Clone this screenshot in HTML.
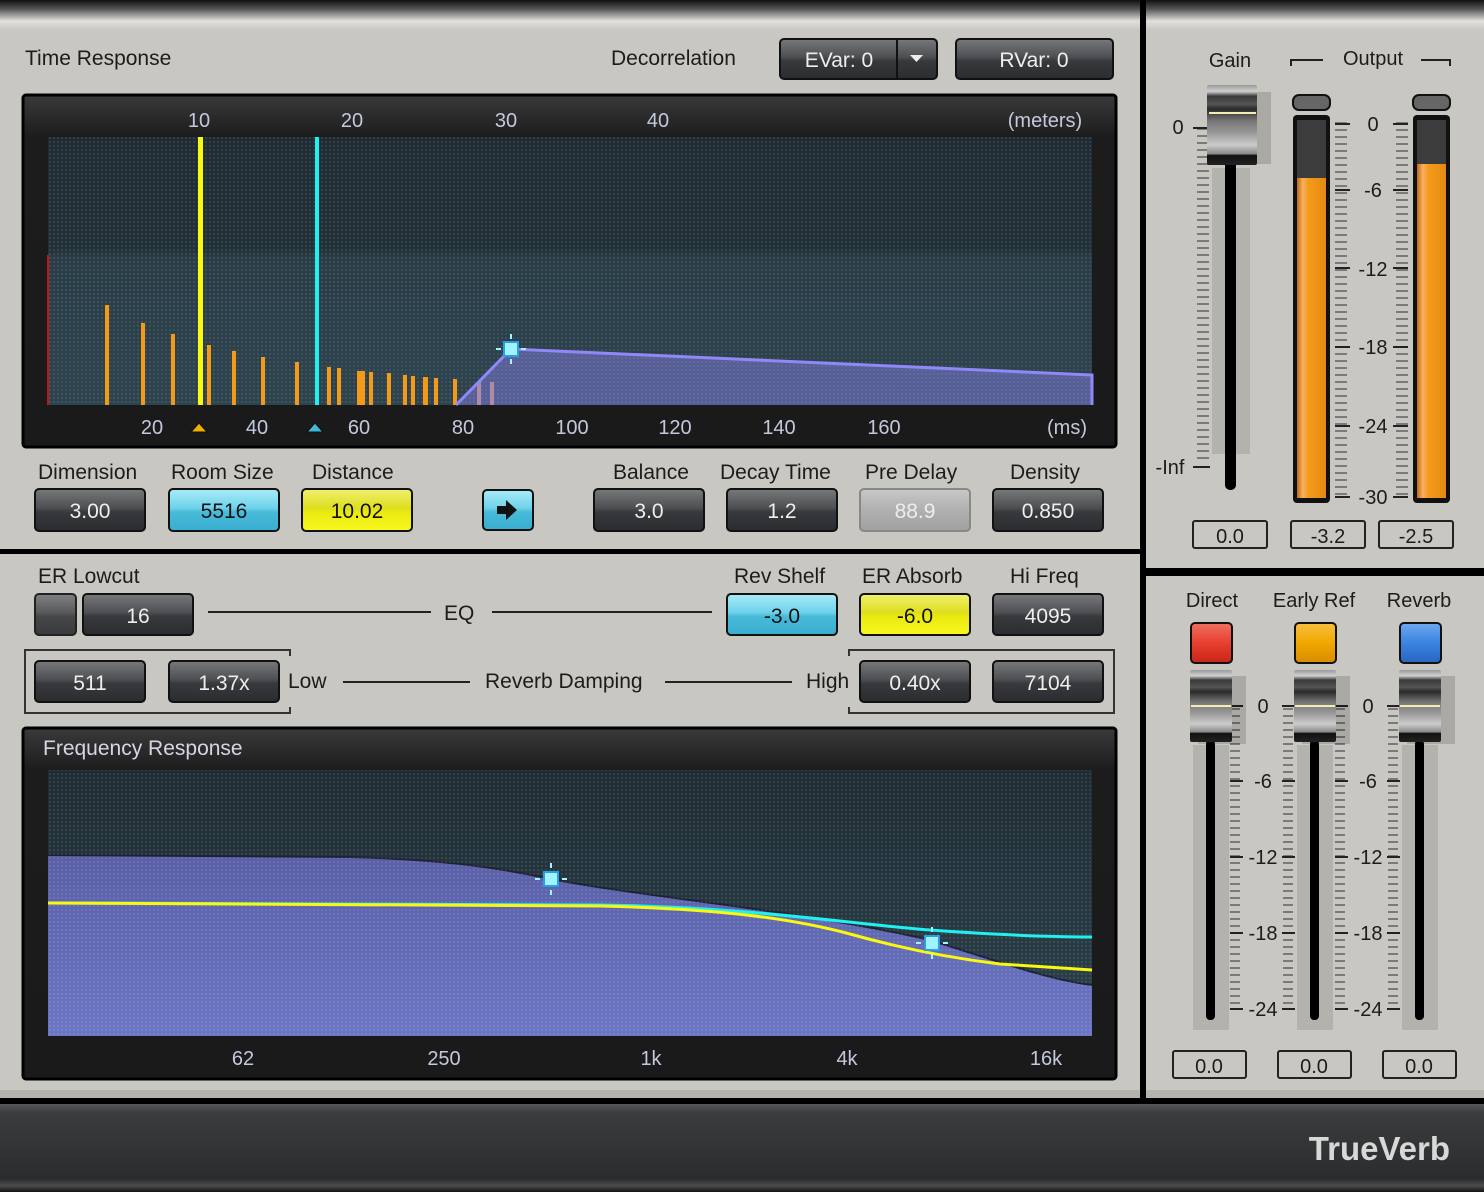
<!DOCTYPE html>
<html><head><meta charset="utf-8"><style>
html,body{margin:0;padding:0;background:#000;}
svg{display:block;font-family:"Liberation Sans",sans-serif;}
.lb{font-size:21px;fill:#1c1c1c;}
.bt{font-size:21px;fill:#eeeeee;text-anchor:middle;}
.bk{font-size:21px;fill:#111;text-anchor:middle;}
.ax{font-size:20px;fill:#c4c8dc;text-anchor:middle;}
.sc{font-size:20px;fill:#1c1c1c;text-anchor:middle;}
</style></head><body>
<svg width="1484" height="1192" viewBox="0 0 1484 1192" xmlns="http://www.w3.org/2000/svg">
<defs>
<linearGradient id="dk" x1="0" y1="0" x2="0" y2="1"><stop offset="0" stop-color="#77797b"/><stop offset=".45" stop-color="#4d4f52"/><stop offset=".55" stop-color="#37393c"/><stop offset="1" stop-color="#2a2c2f"/></linearGradient>
<linearGradient id="cy" x1="0" y1="0" x2="0" y2="1"><stop offset="0" stop-color="#a8ecf8"/><stop offset=".45" stop-color="#6fd2ea"/><stop offset=".55" stop-color="#48bad8"/><stop offset="1" stop-color="#3aaed0"/></linearGradient>
<linearGradient id="ye" x1="0" y1="0" x2="0" y2="1"><stop offset="0" stop-color="#f0f070"/><stop offset=".45" stop-color="#dede20"/><stop offset=".55" stop-color="#eaea10"/><stop offset="1" stop-color="#f8f820"/></linearGradient>
<linearGradient id="gy" x1="0" y1="0" x2="0" y2="1"><stop offset="0" stop-color="#c8c8c8"/><stop offset=".5" stop-color="#b0b0b0"/><stop offset="1" stop-color="#a0a0a0"/></linearGradient>
<linearGradient id="top" x1="0" y1="0" x2="0" y2="1"><stop offset="0" stop-color="#111"/><stop offset=".3" stop-color="#555"/><stop offset=".7" stop-color="#e2e0da"/><stop offset="1" stop-color="#c9c7c1"/></linearGradient>
<linearGradient id="bar" x1="0" y1="0" x2="0" y2="1"><stop offset="0" stop-color="#555759"/><stop offset=".1" stop-color="#3a3c3e"/><stop offset=".85" stop-color="#2a2c2e"/><stop offset=".93" stop-color="#4a4c4e"/><stop offset="1" stop-color="#111"/></linearGradient>
<linearGradient id="tp" x1="0" y1="0" x2="0" y2="1"><stop offset="0" stop-color="#1f2c33"/><stop offset=".42" stop-color="#223038"/><stop offset=".45" stop-color="#2a3d47"/><stop offset="1" stop-color="#2d434e"/></linearGradient>
<linearGradient id="fp" x1="0" y1="0" x2="0" y2="1"><stop offset="0" stop-color="#1f2c33"/><stop offset="1" stop-color="#2c424c"/></linearGradient>
<linearGradient id="pf" x1="0" y1="0" x2="0" y2="1"><stop offset="0" stop-color="#5a5fa6"/><stop offset="1" stop-color="#6b76c4"/></linearGradient>
<linearGradient id="fr" x1="0" y1="0" x2="0" y2="1"><stop offset="0" stop-color="#3a3a3a"/><stop offset=".12" stop-color="#1c1c1c"/><stop offset="1" stop-color="#1a1a1a"/></linearGradient>
<linearGradient id="mt" x1="0" y1="0" x2="1" y2="0"><stop offset="0" stop-color="#c06a10"/><stop offset=".2" stop-color="#f8b060"/><stop offset=".4" stop-color="#f49a1a"/><stop offset="1" stop-color="#e48a10"/></linearGradient>
<linearGradient id="kn" x1="0" y1="0" x2="0" y2="1"><stop offset="0" stop-color="#9a9a9a"/><stop offset=".08" stop-color="#d0d0d0"/><stop offset=".14" stop-color="#3a3a3a"/><stop offset=".24" stop-color="#555"/><stop offset=".3" stop-color="#2a2a2a"/><stop offset=".45" stop-color="#777"/><stop offset=".6" stop-color="#999"/><stop offset=".75" stop-color="#ccc"/><stop offset=".86" stop-color="#888"/><stop offset=".88" stop-color="#111"/><stop offset="1" stop-color="#222"/></linearGradient>
<linearGradient id="rd" x1="0" y1="0" x2="0" y2="1"><stop offset="0" stop-color="#f07060"/><stop offset=".5" stop-color="#e84030"/><stop offset="1" stop-color="#c82418"/></linearGradient>
<linearGradient id="or" x1="0" y1="0" x2="0" y2="1"><stop offset="0" stop-color="#f8c040"/><stop offset=".5" stop-color="#f0a800"/><stop offset="1" stop-color="#d88c00"/></linearGradient>
<linearGradient id="bl" x1="0" y1="0" x2="0" y2="1"><stop offset="0" stop-color="#70a8f0"/><stop offset=".5" stop-color="#3a84e0"/><stop offset="1" stop-color="#2a64c0"/></linearGradient>
<pattern id="dots" width="4" height="4" patternUnits="userSpaceOnUse"><rect x="1" y="1" width="2" height="2" fill="#ffffff" fill-opacity="0.09"/></pattern>
</defs>

<rect width="1484" height="1192" fill="#000"/>
<rect x="0" y="0" width="1140" height="549" fill="#c9c7c1"/>
<rect x="0" y="0" width="1140" height="30" fill="url(#top)"/>
<rect x="1146" y="0" width="338" height="568" fill="#c9c7c1"/>
<rect x="1146" y="0" width="338" height="30" fill="url(#top)"/>
<rect x="0" y="554" width="1140" height="544" fill="#c9c7c1"/>
<rect x="1146" y="576" width="338" height="522" fill="#c9c7c1"/>
<rect x="0" y="1090" width="1140" height="8" fill="#b5b3ad"/>
<rect x="1146" y="1090" width="338" height="8" fill="#b5b3ad"/>
<rect x="0" y="1104" width="1484" height="88" fill="url(#bar)"/>
<text x="1450" y="1160" font-size="33" font-weight="bold" fill="#d8d8d8" text-anchor="end">TrueVerb</text>

<text class="lb" x="25" y="65">Time Response</text>
<text class="lb" x="611" y="65">Decorrelation</text>
<rect x="780" y="39" width="157" height="40" rx="4" fill="url(#dk)" stroke="#111" stroke-width="2"/>
<line x1="897" y1="40" x2="897" y2="78" stroke="#111" stroke-width="2"/>
<text class="bt" x="839" y="67">EVar: 0</text>
<path d="M910,55 h13 l-6.5,7 z" fill="#eee"/>
<rect x="956" y="39" width="157" height="40" rx="4" fill="url(#dk)" stroke="#111" stroke-width="2"/>
<text class="bt" x="1034" y="67">RVar: 0</text>

<rect x="23" y="95" width="1093" height="352" rx="3" fill="url(#fr)" stroke="#000" stroke-width="3"/>
<rect x="48" y="137" width="1044" height="268" fill="url(#tp)"/>
<rect x="48" y="137" width="1044" height="268" fill="url(#dots)"/>
<g class="ax"><text x="199" y="127">10</text><text x="352" y="127">20</text><text x="506" y="127">30</text><text x="658" y="127">40</text><text x="1045" y="127">(meters)</text>
<text x="152" y="434">20</text><text x="257" y="434">40</text><text x="359" y="434">60</text><text x="463" y="434">80</text><text x="572" y="434">100</text><text x="675" y="434">120</text><text x="779" y="434">140</text><text x="884" y="434">160</text><text x="1067" y="434">(ms)</text></g>
<path d="M191,432 l8,-9 l8,9 z" fill="#f0b000" stroke="#111" stroke-width="1"/>
<path d="M307,432 l8,-9 l8,9 z" fill="#40b8d8" stroke="#111" stroke-width="1"/>
<rect x="47" y="255" width="2" height="150" fill="#c01818"/>
<g fill="#f59a18">
<rect x="105" y="305" width="4" height="100"/><rect x="141" y="323" width="4" height="82"/><rect x="171" y="334" width="4" height="71"/>
<rect x="207" y="345" width="4" height="60"/><rect x="232" y="351" width="4" height="54"/><rect x="261" y="357" width="4" height="48"/>
<rect x="295" y="362" width="4" height="43"/><rect x="327" y="367" width="4" height="38"/><rect x="337" y="368" width="4" height="37"/>
<rect x="357" y="371" width="8" height="34"/><rect x="369" y="372" width="4" height="33"/><rect x="387" y="373" width="4" height="32"/>
<rect x="403" y="375" width="4" height="30"/><rect x="411" y="376" width="4" height="29"/><rect x="423" y="377" width="5" height="28"/>
<rect x="434" y="378" width="4" height="27"/><rect x="453" y="379" width="4" height="26"/></g>
<rect x="477" y="382" width="4" height="23" fill="#c89070"/><rect x="490" y="382" width="4" height="23" fill="#c89070"/>
<rect x="198" y="137" width="5" height="268" fill="#f8f810"/>
<rect x="315" y="137" width="4" height="268" fill="#20f0f0"/>
<path d="M456,405 L511,349 L1092,375 L1092,405 Z" fill="#8c84f0" fill-opacity="0.45"/>
<path d="M456,405 L511,349 L1092,375 L1092,405" fill="none" stroke="#9088f8" stroke-width="3"/>
<rect x="504" y="342" width="14" height="14" fill="#a0f4ff" stroke="#28a0e8" stroke-width="2"/>
<g stroke="#a0f4ff" stroke-width="2"><line x1="511" y1="334" x2="511" y2="339"/><line x1="511" y1="359" x2="511" y2="364"/><line x1="496" y1="349" x2="501" y2="349"/><line x1="521" y1="349" x2="526" y2="349"/></g>

<g class="lb"><text x="38" y="479">Dimension</text><text x="171" y="479">Room Size</text><text x="312" y="479">Distance</text><text x="613" y="479">Balance</text><text x="720" y="479">Decay Time</text><text x="865" y="479">Pre Delay</text><text x="1010" y="479">Density</text></g>
<rect x="35" y="489" width="110" height="42" rx="4" fill="url(#dk)" stroke="#111" stroke-width="2"/><text class="bt" x="90" y="518">3.00</text>
<rect x="169" y="489" width="110" height="42" rx="4" fill="url(#cy)" stroke="#111" stroke-width="2"/><text class="bk" x="224" y="518">5516</text>
<rect x="302" y="489" width="110" height="42" rx="4" fill="url(#ye)" stroke="#111" stroke-width="2"/><text class="bk" x="357" y="518">10.02</text>
<rect x="483" y="490" width="50" height="40" rx="4" fill="url(#cy)" stroke="#111" stroke-width="2"/>
<path d="M497,506 h9 v-6 l11,10 l-11,10 v-6 h-9 z" fill="#111"/>
<rect x="594" y="489" width="110" height="42" rx="4" fill="url(#dk)" stroke="#111" stroke-width="2"/><text class="bt" x="649" y="518">3.0</text>
<rect x="727" y="489" width="110" height="42" rx="4" fill="url(#dk)" stroke="#111" stroke-width="2"/><text class="bt" x="782" y="518">1.2</text>
<rect x="860" y="489" width="110" height="42" rx="4" fill="url(#gy)" stroke="#888" stroke-width="2"/><text class="bt" x="915" y="518">88.9</text>
<rect x="993" y="489" width="110" height="42" rx="4" fill="url(#dk)" stroke="#111" stroke-width="2"/><text class="bt" x="1048" y="518">0.850</text>

<g class="lb"><text x="38" y="583">ER Lowcut</text><text x="734" y="583">Rev Shelf</text><text x="862" y="583">ER Absorb</text><text x="1010" y="583">Hi Freq</text>
<text x="444" y="620">EQ</text><text x="288" y="688">Low</text><text x="485" y="688">Reverb Damping</text><text x="806" y="688">High</text></g>
<rect x="35" y="594" width="41" height="41" rx="4" fill="url(#dk)" stroke="#111" stroke-width="2" opacity=".9"/>
<rect x="83" y="594" width="110" height="41" rx="4" fill="url(#dk)" stroke="#111" stroke-width="2"/><text class="bt" x="138" y="623">16</text>
<line x1="208" y1="612" x2="431" y2="612" stroke="#222" stroke-width="2"/><line x1="492" y1="612" x2="712" y2="612" stroke="#222" stroke-width="2"/>
<rect x="727" y="594" width="110" height="41" rx="4" fill="url(#cy)" stroke="#111" stroke-width="2"/><text class="bk" x="782" y="623">-3.0</text>
<rect x="860" y="594" width="110" height="41" rx="4" fill="url(#ye)" stroke="#111" stroke-width="2"/><text class="bk" x="915" y="623">-6.0</text>
<rect x="993" y="594" width="110" height="41" rx="4" fill="url(#dk)" stroke="#111" stroke-width="2"/><text class="bt" x="1048" y="623">4095</text>
<path d="M290,656 V650 H25 V713 H290 V707" fill="none" stroke="#333" stroke-width="2"/>
<path d="M849,656 V650 H1114 V713 H849 V707" fill="none" stroke="#333" stroke-width="2"/>
<line x1="343" y1="682" x2="470" y2="682" stroke="#222" stroke-width="2"/><line x1="665" y1="682" x2="792" y2="682" stroke="#222" stroke-width="2"/>
<rect x="35" y="661" width="110" height="41" rx="4" fill="url(#dk)" stroke="#111" stroke-width="2"/><text class="bt" x="90" y="690">511</text>
<rect x="169" y="661" width="110" height="41" rx="4" fill="url(#dk)" stroke="#111" stroke-width="2"/><text class="bt" x="224" y="690">1.37x</text>
<rect x="860" y="661" width="110" height="41" rx="4" fill="url(#dk)" stroke="#111" stroke-width="2"/><text class="bt" x="915" y="690">0.40x</text>
<rect x="993" y="661" width="110" height="41" rx="4" fill="url(#dk)" stroke="#111" stroke-width="2"/><text class="bt" x="1048" y="690">7104</text>

<rect x="23" y="728" width="1093" height="351" rx="3" fill="url(#fr)" stroke="#000" stroke-width="3"/>
<text x="43" y="755" font-size="21" fill="#d4d6e4">Frequency Response</text>
<rect x="48" y="770" width="1044" height="266" fill="url(#fp)"/>
<path d="M48,855 L350,857 C450,860 500,868 551,879 C650,898 800,910 930,940 C1000,962 1050,980 1092,985 L1092,1036 L48,1036 Z" fill="url(#pf)"/>
<path d="M48,855 L350,857 C450,860 500,868 551,879 C650,898 800,910 930,940 C1000,962 1050,980 1092,985" fill="none" stroke="#1e2236" stroke-width="2"/>
<rect x="48" y="770" width="1044" height="266" fill="url(#dots)"/>
<path d="M48,903 L600,905 C750,907 850,924 930,930 C1000,935 1050,937 1092,937" fill="none" stroke="#20f0f0" stroke-width="3"/>
<path d="M48,903 L600,906 C720,909 790,918 850,934 C900,948 950,958 1000,964 L1092,970" fill="none" stroke="#f8f810" stroke-width="3"/>
<rect x="544" y="872" width="14" height="14" fill="#a0f4ff" stroke="#28a0e8" stroke-width="2"/>
<g stroke="#a0f4ff" stroke-width="2"><line x1="551" y1="863" x2="551" y2="868"/><line x1="551" y1="890" x2="551" y2="895"/><line x1="535" y1="879" x2="540" y2="879"/><line x1="562" y1="879" x2="567" y2="879"/></g>
<rect x="925" y="936" width="14" height="14" fill="#a0f4ff" stroke="#28a0e8" stroke-width="2"/>
<g stroke="#a0f4ff" stroke-width="2"><line x1="932" y1="927" x2="932" y2="932"/><line x1="932" y1="954" x2="932" y2="959"/><line x1="916" y1="943" x2="921" y2="943"/><line x1="943" y1="943" x2="948" y2="943"/></g>
<g class="ax"><text x="243" y="1065">62</text><text x="444" y="1065">250</text><text x="651" y="1065">1k</text><text x="847" y="1065">4k</text><text x="1046" y="1065">16k</text></g>

<text class="sc" x="1230" y="67">Gain</text>
<text class="sc" x="1373" y="65">Output</text>
<path d="M1291,66 V60 H1323" fill="none" stroke="#222" stroke-width="2"/><path d="M1421,60 H1450 V66" fill="none" stroke="#222" stroke-width="2"/>
<rect x="1212" y="168" width="38" height="286" fill="#b4b2ac"/>
<line x1="1203" y1="128" x2="1203" y2="460" stroke="#7a7a7a" stroke-width="12" stroke-dasharray="2 5"/>
<line x1="1193" y1="128" x2="1210" y2="128" stroke="#222" stroke-width="2"/><line x1="1193" y1="467" x2="1210" y2="467" stroke="#222" stroke-width="2"/>
<text class="sc" x="1178" y="134">0</text><text class="sc" x="1170" y="474">-Inf</text>
<rect x="1225" y="150" width="11" height="340" rx="5" fill="#000"/>
<rect x="1215" y="92" width="56" height="72" fill="#000" opacity=".15"/>
<rect x="1207" y="85" width="50" height="80" rx="2" fill="url(#kn)"/>
<line x1="1209" y1="113" x2="1256" y2="113" stroke="#f4ecb0" stroke-width="2"/>
<g>
<rect x="1293" y="95" width="37" height="15" rx="6" fill="#666" stroke="#111" stroke-width="2"/>
<rect x="1293" y="115" width="37" height="388" rx="4" fill="#111"/>
<rect x="1297" y="120" width="29" height="58" fill="#3c3c3c"/>
<rect x="1297" y="178" width="29" height="320" fill="url(#mt)"/>
<rect x="1413" y="95" width="37" height="15" rx="6" fill="#666" stroke="#111" stroke-width="2"/>
<rect x="1413" y="115" width="37" height="388" rx="4" fill="#111"/>
<rect x="1417" y="120" width="29" height="44" fill="#3c3c3c"/>
<rect x="1417" y="164" width="29" height="334" fill="url(#mt)"/>
</g>
<line x1="1341" y1="122" x2="1341" y2="500" stroke="#7a7a7a" stroke-width="12" stroke-dasharray="2 5"/>
<line x1="1402" y1="122" x2="1402" y2="500" stroke="#7a7a7a" stroke-width="12" stroke-dasharray="2 5"/>
<g stroke="#222" stroke-width="2">
<path d="M1335,124h15M1393,124h15M1335,190h15M1393,190h15M1335,268h15M1393,268h15M1335,347h15M1393,347h15M1335,426h15M1393,426h15M1335,497h15M1393,497h15"/></g>
<g class="sc"><text x="1373" y="131">0</text><text x="1373" y="197">-6</text><text x="1373" y="276">-12</text><text x="1373" y="354">-18</text><text x="1373" y="433">-24</text><text x="1373" y="504">-30</text></g>
<g fill="none" stroke="#222" stroke-width="2"><rect x="1193" y="521" width="74" height="27" rx="2"/><rect x="1291" y="521" width="74" height="27" rx="2"/><rect x="1379" y="521" width="74" height="27" rx="2"/></g>
<g class="sc"><text x="1230" y="543">0.0</text><text x="1328" y="543">-3.2</text><text x="1416" y="543">-2.5</text></g>

<g class="sc"><text x="1212" y="607">Direct</text><text x="1314" y="607">Early Ref</text><text x="1419" y="607">Reverb</text></g>
<rect x="1191" y="623" width="41" height="40" rx="4" fill="url(#rd)" stroke="#111" stroke-width="2"/>
<rect x="1295" y="623" width="41" height="40" rx="4" fill="url(#or)" stroke="#111" stroke-width="2"/>
<rect x="1400" y="623" width="41" height="40" rx="4" fill="url(#bl)" stroke="#111" stroke-width="2"/>
<g fill="#b4b2ac"><rect x="1193" y="745" width="36" height="285"/><rect x="1297" y="745" width="36" height="285"/><rect x="1402" y="745" width="36" height="285"/></g>
<g stroke="#7a7a7a" stroke-width="10" stroke-dasharray="2 5">
<line x1="1235" y1="708" x2="1235" y2="1010"/><line x1="1288" y1="708" x2="1288" y2="1010"/><line x1="1340" y1="708" x2="1340" y2="1010"/><line x1="1393" y1="708" x2="1393" y2="1010"/></g>
<g stroke="#222" stroke-width="2"><path d="M1230,706h13M1282,706h13M1335,706h13M1387,706h13M1230,781h13M1282,781h13M1335,781h13M1387,781h13M1230,857h13M1282,857h13M1335,857h13M1387,857h13M1230,933h13M1282,933h13M1335,933h13M1387,933h13M1230,1009h13M1282,1009h13M1335,1009h13M1387,1009h13"/></g>
<g class="sc"><text x="1263" y="713">0</text><text x="1263" y="788">-6</text><text x="1263" y="864">-12</text><text x="1263" y="940">-18</text><text x="1263" y="1016">-24</text>
<text x="1368" y="713">0</text><text x="1368" y="788">-6</text><text x="1368" y="864">-12</text><text x="1368" y="940">-18</text><text x="1368" y="1016">-24</text></g>
<g fill="#000"><rect x="1206" y="740" width="9" height="280" rx="4"/><rect x="1310" y="740" width="9" height="280" rx="4"/><rect x="1415" y="740" width="9" height="280" rx="4"/></g>
<g>
<rect x="1198" y="676" width="48" height="68" fill="#000" opacity=".15"/><rect x="1302" y="676" width="48" height="68" fill="#000" opacity=".15"/><rect x="1407" y="676" width="48" height="68" fill="#000" opacity=".15"/>
<rect x="1190" y="670" width="42" height="72" rx="2" fill="url(#kn)"/><rect x="1294" y="670" width="42" height="72" rx="2" fill="url(#kn)"/><rect x="1399" y="670" width="42" height="72" rx="2" fill="url(#kn)"/>
<g stroke="#f4ecb0" stroke-width="2"><line x1="1191" y1="706" x2="1231" y2="706"/><line x1="1295" y1="706" x2="1335" y2="706"/><line x1="1400" y1="706" x2="1440" y2="706"/></g>
</g>
<g fill="none" stroke="#222" stroke-width="2"><rect x="1173" y="1051" width="73" height="27" rx="2"/><rect x="1278" y="1051" width="73" height="27" rx="2"/><rect x="1383" y="1051" width="73" height="27" rx="2"/></g>
<g class="sc"><text x="1209" y="1073">0.0</text><text x="1314" y="1073">0.0</text><text x="1419" y="1073">0.0</text></g>
</svg>
</body></html>
